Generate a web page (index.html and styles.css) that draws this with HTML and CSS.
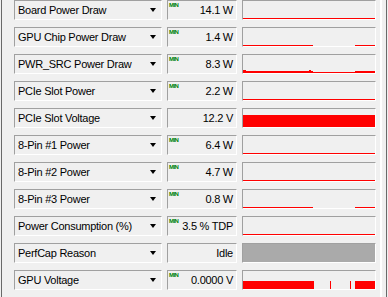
FILE: index.html
```html
<!DOCTYPE html>
<html lang="en">
<head>
    <meta charset="UTF-8">
    <title>Sensors</title>
    <link rel="stylesheet" href="styles.css">
</head>
<body>
    <div class="window">
        <div class="rows">
            <div class="row">
                <div class="name"><span>Board Power Draw</span><i class="arrow"></i></div>
                <div class="value"><span class="min">MIN</span>14.1 W</div>
                <div class="graph"><svg viewBox="0 0 132 18" width="132" height="18"><rect x="0" y="17" width="132" height="1" fill="#f00"/></svg></div>
            </div>
            <div class="row">
                <div class="name"><span>GPU Chip Power Draw</span><i class="arrow"></i></div>
                <div class="value"><span class="min">MIN</span>1.4 W</div>
                <div class="graph"><svg viewBox="0 0 132 18" width="132" height="18"><rect x="0" y="17" width="70" height="1" fill="#f00"/><rect x="112" y="17" width="20" height="1" fill="#f00"/></svg></div>
            </div>
            <div class="row">
                <div class="name"><span>PWR_SRC Power Draw</span><i class="arrow"></i></div>
                <div class="value"><span class="min">MIN</span>8.3 W</div>
                <div class="graph"><svg viewBox="0 0 132 18" width="132" height="18"><rect x="0" y="15" width="3" height="1" fill="#f00"/><rect x="66" y="15" width="2" height="1" fill="#f00"/><rect x="0" y="16" width="70" height="2" fill="#f00"/><rect x="70" y="17" width="42" height="1" fill="#f00"/><rect x="112" y="16" width="20" height="2" fill="#f00"/></svg></div>
            </div>
            <div class="row">
                <div class="name"><span>PCIe Slot Power</span><i class="arrow"></i></div>
                <div class="value"><span class="min">MIN</span>2.2 W</div>
                <div class="graph"><svg viewBox="0 0 132 18" width="132" height="18"><rect x="0" y="17" width="132" height="1" fill="#f00"/></svg></div>
            </div>
            <div class="row">
                <div class="name"><span>PCIe Slot Voltage</span><i class="arrow"></i></div>
                <div class="value">12.2 V</div>
                <div class="graph"><svg viewBox="0 0 132 18" width="132" height="18"><rect x="0" y="6" width="132" height="12" fill="#f00"/></svg></div>
            </div>
            <div class="row">
                <div class="name"><span>8-Pin #1 Power</span><i class="arrow"></i></div>
                <div class="value"><span class="min">MIN</span>6.4 W</div>
                <div class="graph"><svg viewBox="0 0 132 18" width="132" height="18"><rect x="0" y="17" width="132" height="1" fill="#f00"/></svg></div>
            </div>
            <div class="row">
                <div class="name"><span>8-Pin #2 Power</span><i class="arrow"></i></div>
                <div class="value"><span class="min">MIN</span>4.7 W</div>
                <div class="graph"><svg viewBox="0 0 132 18" width="132" height="18"><rect x="0" y="17" width="132" height="1" fill="#f00"/></svg></div>
            </div>
            <div class="row">
                <div class="name"><span>8-Pin #3 Power</span><i class="arrow"></i></div>
                <div class="value"><span class="min">MIN</span>0.8 W</div>
                <div class="graph"><svg viewBox="0 0 132 18" width="132" height="18"><rect x="0" y="17" width="70" height="1" fill="#f00"/><rect x="112" y="17" width="20" height="1" fill="#f00"/></svg></div>
            </div>
            <div class="row">
                <div class="name"><span>Power Consumption (%)</span><i class="arrow"></i></div>
                <div class="value"><span class="min">MIN</span>3.5 % TDP</div>
                <div class="graph"><svg viewBox="0 0 132 18" width="132" height="18"><rect x="0" y="17" width="132" height="1" fill="#f00"/></svg></div>
            </div>
            <div class="row">
                <div class="name"><span>PerfCap Reason</span><i class="arrow"></i></div>
                <div class="value">Idle</div>
                <div class="graph"><svg viewBox="0 0 132 18" width="132" height="18"><rect x="0" y="0" width="132" height="18" fill="#aaa"/></svg></div>
            </div>
            <div class="row">
                <div class="name"><span>GPU Voltage</span><i class="arrow"></i></div>
                <div class="value"><span class="min">MIN</span>0.0000 V</div>
                <div class="graph"><svg viewBox="0 0 132 18" width="132" height="18"><rect x="0" y="10" width="71" height="8" fill="#f00"/><rect x="87" y="10" width="1" height="8" fill="#f00"/><rect x="107" y="10" width="1" height="8" fill="#f00"/><rect x="112" y="10" width="20" height="8" fill="#f00"/></svg></div>
            </div>
        </div>
        <div class="edge"></div>
    </div>
</body>
</html>
```

FILE: styles.css
```css
body {
    margin: 0;
    background-color: #f0f0f0;
    font-family: "Liberation Sans", Arial, sans-serif;
    font-size: 11px;
    letter-spacing: -0.25px;
    color: #000;
}
.window {
    display: flex;
    margin-left: 1px;
    width: 386px;
    height: 297px;
    box-sizing: border-box;
    border-left: 1px solid #696969;
    border-right: 1px solid #696969;
    overflow: hidden;
}
.rows {
    width: 374px;
    box-sizing: border-box;
    padding-left: 12px;
}
.row {
    display: flex;
    gap: 5px;
    height: 20px;
    margin-bottom: 7px;
}
.name, .value, .graph {
    box-sizing: border-box;
    height: 20px;
    border: 1px solid;
    border-color: #a0a0a0 #fff #fff #a0a0a0;
}
.name {
    width: 148px;
    display: flex;
    align-items: center;
    padding-left: 3px;
}
.arrow {
    margin-left: auto;
    margin-right: 5px;
    border-left: 3.5px solid transparent;
    border-right: 3.5px solid transparent;
    border-top: 4px solid #000;
}
.value {
    width: 70px;
    position: relative;
    text-align: right;
    padding-right: 3px;
    line-height: 18px;
    white-space: nowrap;
}
.min {
    position: absolute;
    left: 1px;
    top: 1px;
    font-size: 6px;
    line-height: 6px;
    font-weight: bold;
    letter-spacing: -0.6px;
    color: #008000;
}
.graph {
    width: 134px;
}
.graph svg {
    display: block;
}
.edge {
    flex: 1;
    margin-left: 4px;
    border-left: 2px solid #fff;
}
```
